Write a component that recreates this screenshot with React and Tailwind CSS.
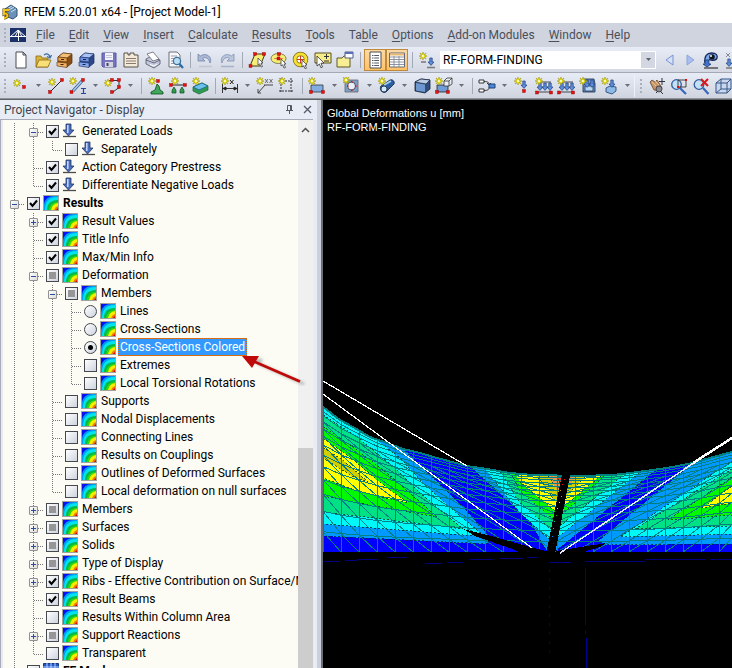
import React from "react";

/* ---------- small drawing parts shared by the toolbar icons ---------- */

function Star({ x = 4, y = 4 }) {
  return (
    <g transform={`translate(${x} ${y})`}>
      <path d="M0-4 1-1.4 3-3 1.6-.6 4 0 1.6.9 3 3 1 1.6 0 4-1 1.6-3 3-1.6.9-4 0-1.6-.6-3-3-1-1.4Z" fill="#f4e800" stroke="#a39a1c" strokeWidth=".6" />
      <circle r="1.1" fill="#fffce0" />
    </g>
  );
}

function Node({ x, y }) {
  return <rect x={x - 1.5} y={y - 1.5} width="3" height="3" fill="#ea1010" stroke="#8d0000" strokeWidth=".4" />;
}

function DownArrow({ x, y }) {
  return <path d={`M${x - 1.2} ${y}h2.4v4h1.8l-3 3.4-3-3.4h1.8z`} fill="#5c8fdc" stroke="#223f7c" strokeWidth=".7" />;
}

const drawings = {
  new: <path d="M4 1h7l3 3v13H4zM11 1v3h3" fill="#fff" stroke="#4c4c52" />,
  open: (
    <>
      <path d="M2 5h5l1 2h6v9H2z" fill="#d9b43f" stroke="#8b6a12" strokeWidth=".8" />
      <path d="m2 16 3-7h12l-3 7z" fill="#f8df78" stroke="#8b6a12" strokeWidth=".8" />
      <path d="M10 4c3-2 5-1 6 2m1.500-2-1.500 3-3-1.500" fill="none" stroke="#3d6ca5" strokeWidth="1.300" />
    </>
  ),
  drawerBrown: (
    <>
      <path d="m2 6 5-4 9 1v9l-5 4-9-2z" fill="#8a4d14" stroke="#57310b" strokeWidth=".7" />
      <path d="m2 6 5-4 9 1-5 4z" fill="#f3c07a" stroke="#57310b" strokeWidth=".6" />
      <path d="M2 6l9 1v4l-9-1z" fill="#e6a050" stroke="#57310b" strokeWidth=".6" />
      <path d="M1 11l10 1v4.500L1 15z" fill="#f0b264" stroke="#57310b" strokeWidth=".6" />
      <path d="M5 8.500h3M4.500 13.500h3" stroke="#402308" strokeWidth="1.200" />
    </>
  ),
  drawerBlue: (
    <>
      <path d="m2 6 5-4 9 1v9l-5 4-9-2z" fill="#2c4688" stroke="#1b2f66" strokeWidth=".7" />
      <path d="m2 6 5-4 9 1-5 4z" fill="#a9c2f4" stroke="#1b2f66" strokeWidth=".6" />
      <path d="M2 6l9 1v4l-9-1z" fill="#6e92dd" stroke="#1b2f66" strokeWidth=".6" />
      <path d="M1 11l10 1v4.500L1 15z" fill="#84a6ea" stroke="#1b2f66" strokeWidth=".6" />
      <path d="M5 8.500h3M4.500 13.500h3" stroke="#132450" strokeWidth="1.200" />
    </>
  ),
  save: (
    <>
      <path d="M2 2h14v14H3l-1-1z" fill="#7775bd" stroke="#5b599f" />
      <path d="M5 2h8v7H5z" fill="#f3f3fb" />
      <path d="M6 4.500h6M6 6.500h6" stroke="#b7b6d2" strokeWidth=".8" />
      <path d="M5 11h8v5H5z" fill="#d4d4dc" />
      <path d="M6.500 12h2v3h-2z" fill="#45437d" />
    </>
  ),
  sheet: (
    <>
      <path d="M2 5V2h4v2h2V2h4v2h4v12H2z" fill="#f4eadb" stroke="#5b5048" />
      <path d="M4 7.500h10M4 10h10M4 12.500h10" stroke="#8b7a6c" />
    </>
  ),
  print: (
    <>
      <path d="m2 8 4-2 10 3v4l-6 4-8-4z" fill="#c5c7dc" stroke="#4f5265" strokeWidth=".8" />
      <path d="m3 3 6-2 6 7-6 2z" fill="#fff" stroke="#62666f" strokeWidth=".8" />
      <path d="m2 9 8 3 6-3" fill="none" stroke="#4f5265" strokeWidth=".8" />
      <path d="m6 13.500 4 1.500 3-2" fill="none" stroke="#fff" />
    </>
  ),
  preview: (
    <>
      <path d="M3 1h8l3 3v12H3z" fill="#f8f8fa" stroke="#6d7079" />
      <path d="M5 5h6M5 7.500h3M5 10h2M5 12.500h3" stroke="#9a9da5" />
      <circle cx="11" cy="10" r="3.600" fill="#b9def3" stroke="#3e74a2" strokeWidth="1.300" />
      <path d="m13.500 13 3.500 4" stroke="#2d6ba7" strokeWidth="2.200" />
    </>
  ),
  undo: (
    <>
      <path d="M2 3v7h7L6.500 7.500C9 5.500 13 7 14 12c3-6-4-11-9.500-7z" fill="#aab8d3" stroke="#7387ac" strokeWidth=".8" />
      <path d="M3 15.500h13" stroke="#c1c6d2" strokeWidth="1.500" />
    </>
  ),
  redo: (
    <>
      <path d="M16 3v7H9l2.500-2.500C9 5.500 5 7 4 12 1 6 8 1 13.500 5z" fill="#bac6dc" stroke="#8193b3" strokeWidth=".8" />
      <path d="M3 15.500h13" stroke="#a6b3ca" strokeWidth="1.500" />
    </>
  ),
  surface: (
    <>
      <path d="M7 3h10l-5 12H2z" fill="#f7ee77" stroke="#403b12" />
      <path d="m10 7 5 5h-2l1.500 3.500-1.500.6-1.300-3.300L10 14z" fill="#fff" stroke="#333" strokeWidth=".7" />
      <Node x={7} y={3} /><Node x={16} y={3} /><Node x={2.500} y={15} />
    </>
  ),
  ellipse: (
    <>
      <ellipse cx="8.500" cy="7.500" rx="7.500" ry="5" fill="#f7ee77" stroke="#6b6323" strokeWidth=".8" />
      <path d="M9 3v6M4 7.500h9" stroke="#e0604a" strokeWidth=".8" />
      <path d="m11 8 5 5h-2l1.500 3.500-1.500.6-1.300-3.300L11 15z" fill="#fff" stroke="#444" strokeWidth=".8" />
      <Node x={9} y={3} /><Node x={8.500} y={7.500} />
    </>
  ),
  ring: (
    <>
      <circle cx="8.500" cy="8.500" r="5.500" fill="#fff" stroke="#7b6a12" strokeWidth="4.500" />
      <circle cx="8.500" cy="8.500" r="5.500" fill="none" stroke="#f5df36" strokeWidth="3" />
      <path d="M8.500 5v7M5 8.500h7" stroke="#d8381b" />
      <path d="m10 9 5 5-2 .2 1.500 3-1.500.5-1.300-3L10 16z" fill="#fff" stroke="#333" strokeWidth=".7" />
    </>
  ),
  select: (
    <>
      <path d="M1 2h16v10H1z" fill="#f7ec8a" stroke="#55501f" />
      <path d="M10 5.500h5M12.500 3v5M10 10h5" stroke="#333" />
      <path d="m3 5 7 7-3 .3 1.500 3.700-1.600.7-1.500-3.700L3 15z" fill="#fff" stroke="#333" strokeWidth=".8" />
    </>
  ),
  windowFolder: (
    <>
      <path d="M1 7h5l2-2h6v11H1z" fill="#f8ee93" stroke="#5f5822" />
      <path d="M9 1h8v6H9z" fill="#fff" stroke="#53618c" />
      <path d="M9 2h8" stroke="#5a70b5" strokeWidth="2" />
    </>
  ),
  listPage: (
    <>
      <path d="M4 1h11v16H4z" fill="#fff" stroke="#4d4d4d" />
      <path d="M6 4.500h7M6 7h7M6 9.500h7M6 12h7M6 14.500h7" stroke="#555a65" strokeDasharray="1.500 .7 5 0" />
    </>
  ),
  table: (
    <>
      <path d="M1.500 2h15v14h-15z" fill="#fff" stroke="#666b78" />
      <path d="M2 3.500h14" stroke="#e7b86e" strokeWidth="2" />
      <path d="M2 6h14M2 8.500h14M2 11h14M2 13.500h14M6 5v11M11 5v11" stroke="#838a99" strokeWidth=".9" />
    </>
  ),
  loadCase: (
    <>
      <Star x={5} y={5} />
      <DownArrow x={13} y={7} />
      <path d="M3 11h5M9 16.500h8" stroke="#777" strokeWidth="1.500" />
    </>
  ),
  prev: <path d="m5 9 7-5v10z" fill="#d5e0fb" stroke="#7892ce" />,
  next: <path d="m13 9-7-5v10z" fill="#a9bdf2" stroke="#8fa3d9" />,
  eye: (
    <>
      <path d="M3 12C2 5 5 2 9.500 2S16 4 15 7s-7 3-8 1" fill="#7eaaf0" stroke="#162c5d" strokeWidth="1.300" />
      <circle cx="10" cy="6" r="2.800" fill="#101820" />
      <circle cx="9" cy="5" r="1" fill="#fff" />
      <path d="M3 9h4v4h2l-4 3-4-3h2z" fill="#4273d0" stroke="#162c5d" strokeWidth=".7" />
      <path d="M2 17h14" stroke="#555" strokeWidth="1.500" />
    </>
  ),
  results: (
    <>
      <path d="m2 2 4 4m0-4L2 6" stroke="#889" />
      <DownArrow x={5} y={8} />
      <path d="M2 17h13" stroke="#777" strokeWidth="1.500" />
    </>
  ),
  point: (
    <>
      <Star x={5} y={6} /><Node x={12} y={10} />
    </>
  ),
  line: (
    <>
      <path d="M3 15 15 3" stroke="#222" />
      <Star x={5} y={5} /><Node x={3} y={15} /><Node x={15} y={3} />
    </>
  ),
  member: (
    <>
      <path d="m4 14 9-10" stroke="#33507a" strokeWidth="3" />
      <path d="m4 14 9-10" stroke="#a5caf2" strokeWidth="1.800" />
      <Star x={4} y={4} /><Node x={2.500} y={15} /><Node x={14} y={3} />
      <path d="M12 11.500h5M14.500 11v5M12 16.500h5" stroke="#25479b" strokeWidth="1.200" />
    </>
  ),
  polyline: (
    <>
      <path d="M5 3.500h10v7l-6 4.500" fill="none" stroke="#333" />
      <Star x={4} y={6} /><Node x={8} y={3} /><Node x={15} y={3} /><Node x={15} y={10} /><Node x={8} y={15} />
    </>
  ),
  support: (
    <>
      <path d="m10 7 2 2 1 4 3 2v2H4v-2l4-2z" fill="#3fa85a" stroke="#0c4b20" strokeWidth=".8" />
      <Star x={5} y={4} /><Node x={11} y={4} />
    </>
  ),
  lineSupport: (
    <>
      <path d="M3 8h12" stroke="#222" />
      <path d="m5 10 2 3.500V16H3v-2.500zm8 0 2 3.500V16h-4v-2.500z" fill="#2f9c4b" stroke="#0c4b20" strokeWidth=".7" />
      <Star x={6} y={4} /><Node x={2} y={8} /><Node x={16} y={8} />
    </>
  ),
  surfaceSupport: (
    <>
      <path d="m2 10 9-4 6 3v4l-9 4-6-3z" fill="#2e9b50" stroke="#11662f" strokeWidth=".7" />
      <path d="m2 10 9-4 6 3-9 4z" fill="#6ec1eb" stroke="#23708e" />
      <Star x={5} y={4} />
    </>
  ),
  dimension: (
    <>
      <path d="M1.500 7v9M16.500 7v9M1 11.500h16M2 11.500l3-1.500v3zM16 11.500l-3-1.500v3z" fill="#222" stroke="#222" strokeWidth=".9" />
      <Star x={4} y={4} />
      <path d="m9 3 3.500 4m0-4L9 7" stroke="#222" />
    </>
  ),
  dimensionXX: (
    <>
      <path d="M8 8h9M9 8l-7 8M2 12v4h3" fill="none" stroke="#444" />
      <Star x={4} y={4} />
      <path d="m9 2 3 4m0-4L9 6m4.500-4 3 4m0-4-3 4" stroke="#555" strokeWidth=".8" />
    </>
  ),
  frame: (
    <>
      <path d="M3 1v15M1 14h15M13 1v15M1 4h15" fill="none" stroke="#333" strokeDasharray="2 1" />
      <Star x={4} y={4} />
    </>
  ),
  rectArea: (
    <>
      <path d="M3 8h12v7H3z" fill="#82ade1" stroke="#333" strokeWidth=".8" />
      <Star x={4} y={4} /><Node x={3} y={15} /><Node x={15} y={15} />
    </>
  ),
  opening: (
    <>
      <path d="M2 3h13v12H2z" fill="#7f9fca" stroke="#666" strokeWidth=".8" />
      <circle cx="8.500" cy="9" r="4" fill="#e9eefa" stroke="#333" strokeWidth=".8" />
      <Star x={3} y={3} />
      <path d="M8 4h1.500v1.500H8zM4 8.500h1.500V10H4zM12 8.500h1.500V10H12zM8 12.500h1.500V14H8z" fill="#e01010" />
    </>
  ),
  tube: (
    <>
      <path d="m3 9 9-6c3-1 5 2 4 4l-8 8c-4 2-7-3-5-6z" fill="#2b5f9f" stroke="#0e2242" strokeWidth=".8" />
      <path d="m6 8 7-4" stroke="#a6d4f5" strokeWidth="1.800" />
      <circle cx="6" cy="12" r="3" fill="#d0e8f7" stroke="#0e2242" strokeWidth=".8" />
      <Star x={4} y={4} />
    </>
  ),
  solid: (
    <>
      <path d="m2 5 6-3 9 1v9l-5 4-10-2z" fill="#2f4d7d" stroke="#18233c" strokeWidth=".8" />
      <path d="m2 5 6-3 9 1-4 4z" fill="#bccce5" stroke="#18233c" strokeWidth=".7" />
      <path d="M3 6l9 1.500V15l-9-1.500z" fill="#6f97cf" />
    </>
  ),
  solidSet: (
    <>
      <path d="M2 8h11v7H2z" fill="#6f9bd6" stroke="#222" strokeWidth=".8" />
      <path d="M9 4l3-3h5v6l-3 2H9zM9 4h5v5m0-5 3-3" fill="#e8eef7" stroke="#333" strokeWidth=".8" />
      <Star x={4} y={4} /><Node x={2} y={15} /><Node x={13} y={15} />
    </>
  ),
  branch: (
    <>
      <path d="M1 3h5v3H1zM1 12h5v3H1z" fill="#fff" stroke="#333" />
      <path d="M6 4.500c4 0 5 1 5 3M6 13.500c4 0 5-1 5-3M9 6l2 2 2-2" fill="none" stroke="#333" />
      <path d="M11 7h6v4h-6z" fill="#4a87d8" stroke="#1d4276" />
    </>
  ),
  nodeLoad: (
    <>
      <DownArrow x={11} y={4} /><Star x={5} y={4} /><Node x={11} y={14} />
    </>
  ),
  lineLoad: (
    <>
      <path d="M3 5h13M2 15h14" stroke="#222" strokeWidth=".8" />
      <DownArrow x={5} y={6} /><DownArrow x={10} y={6} /><DownArrow x={15} y={6} />
      <Star x={4} y={4} /><Node x={2} y={15.500} /><Node x={16} y={15.500} />
    </>
  ),
  surfaceLoad: (
    <>
      <path d="M4 2h11l1 5v8H4z" fill="#6d93cc" stroke="#182a4a" strokeWidth=".8" />
      <path d="M6 9h8v5H6z" fill="#b6d6f3" stroke="#182a4a" strokeWidth=".7" />
      <DownArrow x={8} y={3} /><DownArrow x={13} y={3} /><Star x={4} y={4} />
    </>
  ),
  solidLoad: (
    <>
      <path d="m5 11 4-2 6 1v4l-4 3-6-2z" fill="#8dbbe8" stroke="#1e3c6b" strokeWidth=".8" />
      <DownArrow x={11} y={3} /><Star x={4} y={4} />
    </>
  ),
  pan: (
    <>
      <path d="m2 5 2-2 3 2 2-2 5 8-2 3-6-1z" fill="#c59668" stroke="#664327" strokeWidth=".8" />
      <path d="m4 5 4 4m-1-5 4 4" stroke="#f0cfaa" strokeWidth=".8" />
      <circle cx="11" cy="12" r="3" fill="#8a8d94" stroke="#333" strokeWidth=".8" />
      <path d="m8 16 2-2m2 0 3 3M14 1v7M11 4.500h6" stroke="#333" />
    </>
  ),
  zoomWindow: (
    <>
      <circle cx="6.500" cy="7.500" r="4.800" fill="#bfe0f5" stroke="#345a9b" strokeWidth="1.300" />
      <path d="m10 11 6 6" stroke="#3568ba" strokeWidth="2.200" />
      <path d="M8 3h8v7H8z" fill="none" stroke="#333" strokeWidth=".9" />
      <path d="M15 2h2v2h-2zM7 9h2v2H7z" fill="#e01010" />
    </>
  ),
  zoomOff: (
    <>
      <circle cx="7" cy="7.500" r="4.800" fill="#bfe0f5" stroke="#345a9b" strokeWidth="1.300" />
      <path d="m11 11 5.500 6" stroke="#3568ba" strokeWidth="2.200" />
      <path d="m9 2 7 7m0-7-7 7" stroke="#dc1717" strokeWidth="2" />
    </>
  ),
  cube: (
    <>
      <path d="m2 6 5-4h10v10l-4 4H2z" fill="#c9d7ee" stroke="#365787" />
      <path d="M2 6h11v10M13 6l4-4M7 2v10l-5 4M7 12h10" fill="none" stroke="#365787" />
    </>
  ),
};

function ToolButton({ name, active, width = "w-[22px]" }) {
  return (
    <button
      type="button"
      aria-label={name}
      className={`${width} h-[22px] shrink-0 flex items-center justify-center ${active ? "border border-[#c08a3c] bg-gradient-to-b from-[#fbd9a5] to-[#ffc265]" : ""}`}
    >
      <svg className="size-[18px] shrink-0" viewBox="0 0 18 18" fill="none">{drawings[name]}</svg>
    </button>
  );
}

const Grip = () => (
  <div className="w-[10px] shrink-0 flex flex-col items-center gap-[2px]">
    {[0, 1, 2, 3].map((i) => <span key={i} className="size-[2px] bg-[#a9afbd]" />)}
  </div>
);

const Separator = () => (
  <div className="w-2 shrink-0 flex justify-center"><span className="w-px h-4 bg-[#a3a8b5]" /></div>
);

const MoreButton = ({ name }) => (
  <button type="button" aria-label={`${name} options`} className="w-[13px] h-[22px] shrink-0 flex items-center justify-center">
    <svg className="w-[5px] h-[3px]" viewBox="0 0 5 3"><path d="M0 0h5L2.500 3z" fill="#6a6e78" /></svg>
  </button>
);

/* "|" is a separator, a trailing "+" adds the small drop-down arrow, "*" marks a pressed button */
const firstTools = "new open drawerBrown drawerBlue save sheet print preview | undo redo | surface ellipse ring select windowFolder | listPage* table* | loadCase".split(" ");
const secondTools = "point+ line member+ polyline+ | support lineSupport surfaceSupport | dimension+ dimensionXX frame | rectArea+ opening+ tube+ solid solidSet+ | branch+ nodeLoad lineLoad lineLoad surfaceLoad solidLoad+".split(" ");
const viewTools = ["pan", "zoomWindow", "zoomOff", "cube"];

function Tools({ items }) {
  return items.map((item, i) => {
    if (item === "|") return <Separator key={i} />;
    const name = item.replace(/[+*]/, "");
    return (
      <React.Fragment key={i}>
        <ToolButton name={name} active={item.endsWith("*")} />
        {item.endsWith("+") && <MoreButton name={name} />}
      </React.Fragment>
    );
  });
}

/* ---------- menu ---------- */

const menus = [
  ["", "F", "ile"], ["", "E", "dit"], ["", "V", "iew"], ["", "I", "nsert"], ["", "C", "alculate"], ["", "R", "esults"],
  ["", "T", "ools"], ["Ta", "b", "le"], ["", "O", "ptions"], ["", "A", "dd-on Modules"], ["", "W", "indow"], ["", "H", "elp"],
];

/* ---------- navigator tree ---------- */

/* guides, one letter per column: v line, t tee, l elbow, M minus box, P plus box */
const rows = [
  ["vM", "on", "load", "Generated Loads"],
  ["vvl", "off", "load", "Separately"],
  ["vt", "on", "load", "Action Category Prestress"],
  ["vl", "on", "load", "Differentiate Negative Loads"],
  ["M", "on", "result", "Results"],
  ["vP", "on", "result", "Result Values"],
  ["vt", "on", "result", "Title Info"],
  ["vt", "on", "result", "Max/Min Info"],
  ["vM", "mixed", "result", "Deformation"],
  ["vvM", "mixed", "result", "Members"],
  ["vvvt", "radio", "result", "Lines"],
  ["vvvt", "radio", "result", "Cross-Sections"],
  ["vvvt", "radioOn", "result", "Cross-Sections Colored"],
  ["vvvt", "off", "result", "Extremes"],
  ["vvvl", "off", "result", "Local Torsional Rotations"],
  ["vvt", "off", "result", "Supports"],
  ["vvt", "off", "result", "Nodal Displacements"],
  ["vvt", "off", "result", "Connecting Lines"],
  ["vvt", "off", "result", "Results on Couplings"],
  ["vvt", "off", "result", "Outlines of Deformed Surfaces"],
  ["vvl", "off", "result", "Local deformation on null surfaces"],
  ["vP", "mixed", "result", "Members"],
  ["vP", "mixed", "result", "Surfaces"],
  ["vP", "mixed", "result", "Solids"],
  ["vP", "mixed", "result", "Type of Display"],
  ["vP", "on", "result", "Ribs - Effective Contribution on Surface/Member"],
  ["vt", "on", "result", "Result Beams"],
  ["vt", "off", "result", "Results Within Column Area"],
  ["vP", "mixed", "result", "Support Reactions"],
  ["vl", "off", "result", "Transparent"],
  ["P", "mixed", "mesh", "FE Mesh"],
];

function Guide({ kind }) {
  const box = /[MP]/.test(kind);
  return (
    <span className="relative w-[19px] h-[18px] shrink-0 flex items-center justify-center">
      <svg className="absolute inset-0 size-full" viewBox="0 0 19 18" fill="none" stroke="#77777a" strokeDasharray="1 1" shapeRendering="crispEdges">
        <path d={kind === "l" ? "M9.500 0v9" : "M9.500 0v18"} />
        {kind !== "v" && <path d="M10 9.500h9" />}
      </svg>
      {box && (
        <button type="button" aria-label={kind === "M" ? "Collapse" : "Expand"} className="relative size-[9px] border border-[#919191] rounded-[1px] bg-gradient-to-br from-white to-[#dcdcdc] flex items-center justify-center">
          <span className="w-[5px] h-px bg-[#2b4fa0]" />
          {kind === "P" && <span className="absolute w-px h-[5px] bg-[#2b4fa0]" />}
        </button>
      )}
    </span>
  );
}

function Control({ state, id }) {
  const radio = state.startsWith("radio");
  return (
    <span className="relative w-[19px] shrink-0 flex items-center justify-center">
      <input
        id={id}
        type={radio ? "radio" : "checkbox"}
        name={radio ? "deformation-style" : undefined}
        defaultChecked={state === "on" || state === "radioOn"}
        className={`appearance-none size-[13px] border border-[#45484f] bg-gradient-to-br from-white to-[#cdd3de] ${radio ? "rounded-full" : ""}`}
      />
      {state === "mixed" && <span className="absolute size-[7px] bg-[#969696]" />}
      {state === "radioOn" && <span className="absolute size-[5px] rounded-full bg-black" />}
      {state === "on" && (
        <svg className="absolute size-[9px]" viewBox="0 0 9 9"><path d="m1 4 2.500 3L8 1.500" fill="none" stroke="#000" strokeWidth="2" /></svg>
      )}
    </span>
  );
}

function TreeIcon({ kind }) {
  if (kind === "load")
    return (
      <svg className="size-4 shrink-0" viewBox="0 0 16 16">
        <path d="M4 1h5v6h3l-5.500 6L1 7h3z" fill="#4a6dbd" stroke="#24345f" strokeWidth=".8" />
        <path d="M5.800 2v8" stroke="#c8dbff" strokeWidth="1.500" />
        <path d="M1 13.500h13" stroke="#4c4c4c" strokeWidth="1.300" />
      </svg>
    );
  if (kind === "mesh")
    return (
      <svg className="size-4 shrink-0" viewBox="0 0 16 16">
        <path d="M.5.500h15v15H.5z" fill="#2458c5" stroke="#173a86" />
        <path d="M0 4h16M0 8h16M0 12h16M4 0v16M8 0v16M12 0v16" stroke="#b9d3ff" />
      </svg>
    );
  return (
    <svg className="size-4 shrink-0" viewBox="0 0 16 16">
      <path d="M0 0h16v16H0z" fill="#a3a19c" />
      <path d="M1 1h14v14H1z" fill="#0613f0" />
      <path d="M1 15V9Q3 1 11 1h4v14z" fill="#009bf5" />
      <path d="M2 15Q2 2 15 2v13z" fill="#00e5ea" />
      <path d="M4 15Q4 5 15 5v10z" fill="#00b84b" />
      <path d="M6 15Q7 7 15 7v8z" fill="#31d90e" />
      <path d="M8 15q1-6 7-7v7z" fill="#f5ed00" />
      <path d="M11 15q1-3 4-4v4z" fill="#f07800" />
      <path d="M13 15l2-2v2z" fill="#d50000" />
    </svg>
  );
}

function TreeRow({ row, index }) {
  const [guides, state, icon, text] = row;
  const selected = state === "radioOn";
  const top = guides.length === 1;
  return (
    <li className="h-[18px] flex items-center whitespace-nowrap">
      {guides.split("").map((g, i) => <Guide key={i} kind={g} />)}
      <div className="h-[18px] flex items-center pb-[2px]">
        <Control state={state} id={`item-${index}`} />
        <TreeIcon kind={icon} />
        <label
          htmlFor={`item-${index}`}
          className={`ml-[2px] h-[18px] px-[2px] leading-[18px] ${selected ? "bg-[#3399ff] text-white outline-1 -outline-offset-1 outline-dotted outline-[#d4690f]" : ""} ${top ? "font-bold" : ""}`}
        >
          {text}
        </label>
      </div>
    </li>
  );
}

/* ---------- model view ---------- */

const rim = [[323, 407], [340, 420], [353, 427], [370, 437], [387, 443], [403, 449], [420, 453], [437, 458], [467, 466], [487, 469], [510, 473], [533, 475], [580, 476], [613, 475], [630, 473], [653, 470], [667, 468], [693, 463], [713, 457], [732, 452]];

function rimAt(x) {
  const i = Math.max(1, rim.findIndex((p) => p[0] >= x));
  const [a, b] = [rim[i - 1], rim[i]];
  return a[1] + ((b[1] - a[1]) * (x - a[0])) / (b[0] - a[0]);
}

const surface = `M323 552 L${rim.map((p) => p.join(" ")).join(" L")} L732 552Z`;

const bands = [
  ["#0099ff", "M323 380H403V449L430 475 463 507 490 537 487 544 323 536Z"],
  ["#00f8f8", "M323 380H377V440L400 458 423 483 453 510 483 535 463 535 323 524Z"],
  ["#00e084", "M323 415 357 437 397 470 420 493 463 529 440 526 323 512Z"],
  ["#00f800", "M323 426 353 447 387 473 437 517 370 505 323 496Z"],
  ["#ffff00", "M323 438 350 457 377 480 408 503 360 492 323 478Z"],
  ["#d0d000", "M323 447 345 462 368 482 352 476 323 458Z"],
  ["#0099ff", "M463 460H668L557 550H546L530 521Z"],
  ["#00f8f8", "M478 460H656L554 540H550L520 513Z"],
  ["#00e084", "M493 460H642L555 530H552L520 503Z"],
  ["#00f800", "M505 460H622L557 519H553L520 491Z"],
  ["#ffff00", "M510 465H614L558 511H555L520 482Z"],
  ["#d0d000", "M529 465H596L561 502H556Z"],
  ["#e29a4a", "M541 465H588L562 491H558Z"],
  ["#f03c20", "M551 465H572L563 483H560Z"],
  ["#0099ff", "M732 440H722L693 463 598 541 606 545 732 544Z"],
  ["#00f8f8", "M732 461 620 537 732 534Z"],
  ["#00e084", "M732 469 635 529 732 526Z"],
  ["#00f800", "M732 477 668 520 732 515Z"],
  ["#ffff00", "M732 486 702 508 732 503Z"],
];

function diagonal(left, at, x0, x1, t0, t1) {
  return left ? `M${at(x0, t0)}L${at(x1, t1)}` : `M${at(x0, t1)}L${at(x1, t0)}`;
}

function meshPaths() {
  const paths = [];
  const at = (x, t) => {
    const y = rimAt(x);
    return `${x} ${(y + (552 - y) * t).toFixed(1)}`;
  };
  const levels = [0, 0.03, 0.06, 0.1, 0.15, 0.2, 0.26, 0.33, 0.41, 0.5, 0.6, 0.72, 0.86, 1];
  const xs = Array.from({ length: 24 }, (_, i) => Math.min(732, 323 + i * 18));
  levels.forEach((t) => paths.push(`M${xs.map((x) => at(x, t)).join("L")}`));
  xs.forEach((x) => paths.push(`M${levels.map((t) => at(x, t)).join("L")}`));
  for (let i = 0; i < xs.length - 1; i++)
    for (let j = 3; j < levels.length - 1; j++)
      paths.push(diagonal(xs[i] < 550, at, xs[i], xs[i + 1], levels[j], levels[j + 1]));
  return paths.join("");
}

const mastDots = [["#f00", 564, 479], ["#f00", 562, 484], ["#e80", 560, 490], ["#e80", 561, 496], ["#dd0", 559, 502], ["#dd0", 557, 508], ["#0c0", 556, 515], ["#0c8", 554, 521], ["#0cc", 553, 528], ["#08f", 552, 536], ["#00f", 553, 543]];

function ModelView() {
  return (
    <svg className="absolute inset-0 size-full" viewBox="323 100 409 568" preserveAspectRatio="xMinYMin slice" shapeRendering="crispEdges" fill="none">
      <defs><clipPath id="surface"><path d={surface} /></clipPath></defs>
      <g clipPath="url(#surface)">
        <path d={surface} fill="#0000ff" />
        {bands.map(([fill, d], i) => <path key={i} d={d} fill={fill} stroke="#00302c" strokeWidth=".8" strokeDasharray="2 2" />)}
        <path d={meshPaths()} stroke="#008080" />
      </g>
      <path d={`M${rim.map((p) => p.join(" ")).join("L")}`} stroke="#008080" strokeWidth="2" />
      <path d="M463 529 495 537 530 547 546 551V557H530L512 549 495 543 475 536Z" fill="#000" />
      <path d="M556 551 575 548 606 543 600 547 586 551V554H556Z" fill="#000" />
      <path d="M562 475H570L555 554H546Z" fill="#000" />
      {mastDots.map(([c, x, y]) => <rect key={y} x={x} y={y} width="1" height="1" fill={c} />)}
      <path d="M323 381 467 466M323 394 532 548" stroke="#fff" strokeWidth="1.200" />
      <path d="M560 553 695 462" stroke="#e8e8ff" strokeWidth="1.500" />
      <path d="M693 463 732 438" stroke="#fff" strokeWidth="2.500" />
      <path d="M323 561.500h17M345 560.500h12M357 559.500h21M387 557.500h20M425 563.500h17M447 562.500h16M470 559.500h23M500 558.500h23M527 557.500h10M550 562.500h21M585 561.500h60M645 559.500h60M710 559.500h22" stroke="#000080" />
      <path d="M549.500 569v84" stroke="#000070" strokeDasharray="3 6" />
      <path d="M585.500 568v57M585.500 630v4M586.500 638v30" stroke="#000090" />
    </svg>
  );
}

export default function App() {
  return (
    <div className="h-screen flex flex-col overflow-hidden bg-white text-black text-[12px] font-['Roboto','Noto_Sans',sans-serif]">
      <header className="h-[23px] shrink-0 flex items-center gap-[6px] pl-[2px]">
        <svg className="size-4" viewBox="0 0 16 16">
          <path d="m3 5 6-4 6 4v7l-4 3-8-3z" fill="#6a91b9" stroke="#32516f" />
          <path d="m5 5 5-3m-3 4 5-3m-3 5 5-3" stroke="#cadcf0" />
          <path d="M7 6H2v4c4-2 5 4 0 4" fill="none" stroke="#5a4300" strokeWidth="3" />
          <path d="M7 6H2v4c4-2 5 4 0 4" fill="none" stroke="#f1c21b" strokeWidth="2" />
        </svg>
        <h1>RFEM 5.20.01 x64 - [Project Model-1]</h1>
      </header>

      <nav className="h-6 shrink-0 flex items-center bg-[#d0d4de] text-[#4a4f5b] whitespace-nowrap">
        <Grip />
        <svg className="w-4 h-[14px] shrink-0" viewBox="0 0 16 14">
          <path d="M0 0h16v14H0z" fill="#1b2f68" />
          <path d="M0 8.500h16M8.500 2v11M0 9l8-7 8 7M5 9l3.500-7L12 9" stroke="#fff" fill="none" />
        </svg>
        <ul className="ml-[10px] flex gap-[14px]">
          {menus.map(([a, key, b]) => (
            <li key={key + b}><button type="button">{a}<span className="underline underline-offset-2">{key}</span>{b}</button></li>
          ))}
        </ul>
      </nav>

      <div className="h-[26px] shrink-0 flex items-center border-b border-[#a5a9b3] bg-gradient-to-b from-[#e8ecf6] to-[#d3d8e3]">
        <Grip />
        <Tools items={firstTools} />
        <div className="relative ml-[2px] w-[216px] shrink-0">
          <select aria-label="Load case" className="w-full h-[18px] appearance-none bg-white pl-[3px] leading-[18px]">
            <option>RF-FORM-FINDING</option>
          </select>
          <span className="pointer-events-none absolute right-px top-px w-[14px] h-4 bg-[#d3d7e1] flex items-center justify-center">
            <svg className="w-[5px] h-[3px]" viewBox="0 0 5 3"><path d="M0 0h5L2.500 3z" fill="#5d616c" /></svg>
          </span>
        </div>
        <div className="ml-1 flex">
          <ToolButton name="prev" width="w-5" />
          <ToolButton name="next" width="w-5" />
          <ToolButton name="eye" />
          <ToolButton name="results" />
        </div>
      </div>

      <div className="h-[26px] shrink-0 flex items-center border-b border-[#8f939c] bg-gradient-to-b from-[#e8ecf6] to-[#cfd4df]">
        <Grip />
        <Tools items={secondTools} />
        <div className="flex items-center border-l border-[#eef1f8] pl-px">
          <Grip />
          <Tools items={viewTools} />
        </div>
      </div>

      <main className="flex-1 min-h-0 flex border-t border-[#5f6064]">
        <aside className="relative w-[323px] shrink-0 flex flex-col bg-[#e7ecf5] border-r-2 border-[#6d6f76]">
          <div className="flex-1 min-h-0 flex flex-col border-r-4 border-[#cbd0dc]">
            <div className="h-[19px] shrink-0 flex items-center pl-1 pr-[5px] text-[#41454f]">
              <h2 className="flex-1">Project Navigator - Display</h2>
              <button type="button" aria-label="Pin" className="mr-[9px]">
                <svg className="size-[9px]" viewBox="0 0 9 9" fill="none" stroke="#555963"><path d="M2.500 5V.500h4V5M5.500 1v4M1 5.500h7M4.500 6v3" /></svg>
              </button>
              <button type="button" aria-label="Close">
                <svg className="size-[9px]" viewBox="0 0 9 9" stroke="#555963" strokeWidth="1.300"><path d="m1 1 7 7m0-7L1 8" /></svg>
              </button>
            </div>
            <div className="flex-1 min-h-0 flex border-l border-t border-[#a9acb8] mr-1">
              <ul className="flex-1 min-w-0 overflow-hidden bg-[#fcfcf4] border-l-2 border-[#e8eaf2] pl-[2px] pt-[3px]">
                {rows.map((row, i) => <TreeRow key={i} row={row} index={i} />)}
              </ul>
              <div className="w-[15px] shrink-0 flex flex-col bg-[#f0f0f0]">
                <svg className="mx-auto mt-[7px] w-[9px] h-[6px]" viewBox="0 0 9 6" fill="none" stroke="#505050" strokeWidth="1.500"><path d="m1 5 3.500-3.500L8 5" /></svg>
                <div className="mt-[315px] flex-1 bg-[#cdcdcd]" />
              </div>
            </div>
          </div>
          <svg className="pointer-events-none absolute left-[238px] top-[250px] w-[72px] h-9" viewBox="238 350 72 36">
            <defs><filter id="soft"><feGaussianBlur stdDeviation="1.500" /></filter></defs>
            <path d="m249 360 12 0-2 4 45 20" fill="#777" stroke="#777" strokeWidth="2.500" opacity=".5" filter="url(#soft)" />
            <path d="m254 361.500 46 20" stroke="#bf0a0a" strokeWidth="2.800" />
            <path d="M242 356h17l-7 12z" fill="#bf0a0a" />
          </svg>
        </aside>

        <section className="relative flex-1 min-w-0 overflow-hidden bg-black">
          <ModelView />
          <p className="relative pl-1 pt-[6px] text-[11px] leading-[14px] text-white font-['Liberation_Sans',Arial,sans-serif]">
            Global Deformations u [mm]<br />RF-FORM-FINDING
          </p>
        </section>
      </main>
    </div>
  );
}
